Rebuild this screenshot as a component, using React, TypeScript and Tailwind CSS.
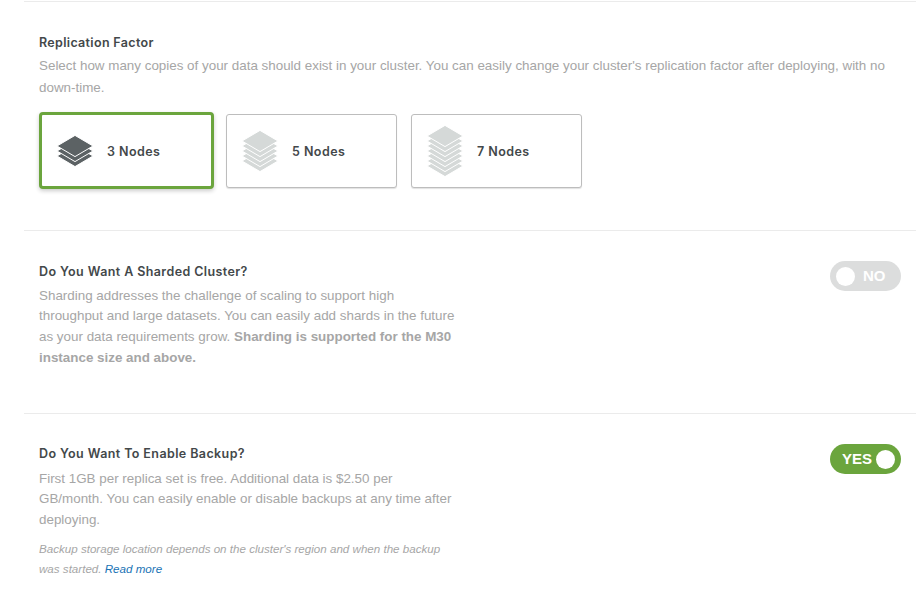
import React from "react";

function Stack({ layers, color }: { layers: number; color: string }) {
  const gap = 5;
  const h = 20 + (layers - 1) * gap;
  const order = Array.from({ length: layers }, (_, i) => layers - 1 - i);
  return (
    <svg width="36" height={h + 2} viewBox={`-1 -1 36 ${h + 2}`} className="shrink-0 -mx-px">
      {order.map((i) => {
        const y = i * gap;
        return (
          <path
            key={i}
            d={`M17 ${y - 0.6} L35 ${y + 10} L17 ${y + 20.6} L-1 ${y + 10} Z`}
            fill={color}
            stroke="#ffffff"
            strokeWidth="1"
          />
        );
      })}
    </svg>
  );
}

function NodeCard({
  label,
  layers,
  selected,
}: {
  label: string;
  layers: number;
  selected?: boolean;
}) {
  return selected ? (
    <div className="flex h-[77px] w-[175px] items-center rounded-[4px] border-[3px] border-[#6ba53d] bg-white pl-[16px] shadow-[0_2px_4px_rgba(0,0,0,0.2)]">
      <Stack layers={layers} color="#5c6264" />
      <span className="ml-[15px] mt-[3px] text-[12.5px] font-semibold tracking-[0.45px] text-[#43484a]">{label}</span>
    </div>
  ) : (
    <div className="flex h-[74px] w-[171px] items-center rounded-[3px] border border-[#bdbdbd] bg-white pl-[16px] shadow-[0_1px_1px_rgba(0,0,0,0.12)]">
      <Stack layers={layers} color="#d5d9d8" />
      <span className="ml-[15px] mt-[3px] text-[12.5px] font-semibold tracking-[0.45px] text-[#43484a]">{label}</span>
    </div>
  );
}

export default function App() {
  return (
    <div className="h-[613px] w-[916px] overflow-hidden bg-white pl-[24px] pt-px font-['Inter',sans-serif]">
      <section className="h-[229px] border-t border-[#ebebeb] pl-[15px] pt-[32px]">
        <h2 className="text-[12.5px] leading-[18px] font-semibold tracking-[0.33px] text-[#43484a]">Replication Factor</h2>
        <p className="mt-[3px] w-[860px] font-['Liberation_Sans',sans-serif] text-[13.4px] leading-[22px] text-[#a6a6a6]">
          Select how many copies of your data should exist in your cluster. You can easily change your cluster's replication factor after deploying, with no down-time.
        </p>
        <div className="mt-[13px] flex items-center">
          <NodeCard label="3 Nodes" layers={3} selected />
          <div className="ml-[12px]"><NodeCard label="5 Nodes" layers={5} /></div>
          <div className="ml-[14px]"><NodeCard label="7 Nodes" layers={7} /></div>
        </div>
      </section>

      <section className="flex h-[183px] justify-between border-t border-[#ebebeb] pl-[15px] pr-[15px] pt-[32px]">
        <div className="w-[420px]">
          <h2 className="text-[12.5px] leading-[18px] font-semibold tracking-[0.4px] text-[#43484a]">Do You Want A Sharded Cluster?</h2>
          <p className="mt-[4.5px] font-['Liberation_Sans',sans-serif] text-[13.4px] leading-[20.67px] text-[#a6a6a6]">
            Sharding addresses the challenge of scaling to support high throughput and large datasets. You can easily add shards in the future as your data requirements grow. <b>Sharding is supported for the M30 instance size and above.</b>
          </p>
        </div>
        <div className="-mt-[2px] flex h-[30px] w-[71px] items-center rounded-full bg-[#dcdddd] pl-[6px]">
          <span className="h-[19px] w-[19px] rounded-full bg-white" />
          <span className="ml-[8px] font-['Liberation_Sans',sans-serif] text-[15px] font-bold text-white">NO</span>
        </div>
      </section>

      <section className="flex justify-between border-t border-[#ebebeb] pl-[15px] pr-[15px] pt-[31px]">
        <div className="w-[420px]">
          <h2 className="text-[12.5px] leading-[18px] font-semibold tracking-[0.4px] text-[#43484a]">Do You Want To Enable Backup?</h2>
          <p className="mt-[5.5px] font-['Liberation_Sans',sans-serif] text-[13.4px] leading-[20.67px] text-[#a6a6a6]">
            First 1GB per replica set is free. Additional data is $2.50 per GB/month. You can easily enable or disable backups at any time after deploying.
          </p>
          <p className="mt-[8.5px] font-['Liberation_Sans',sans-serif] text-[11.6px] leading-[20px] italic text-[#a6a6a6]">
            Backup storage location depends on the cluster's region and when the backup was started. <a className="text-[#1a73b5]">Read more</a>
          </p>
        </div>
        <div className="-mt-px flex h-[30px] w-[71px] items-center justify-between rounded-full bg-[#6ba53d] pl-[12px] pr-[6px]">
          <span className="font-['Liberation_Sans',sans-serif] text-[15px] font-bold text-white">YES</span>
          <span className="h-[19px] w-[19px] rounded-full bg-white" />
        </div>
      </section>
    </div>
  );
}
